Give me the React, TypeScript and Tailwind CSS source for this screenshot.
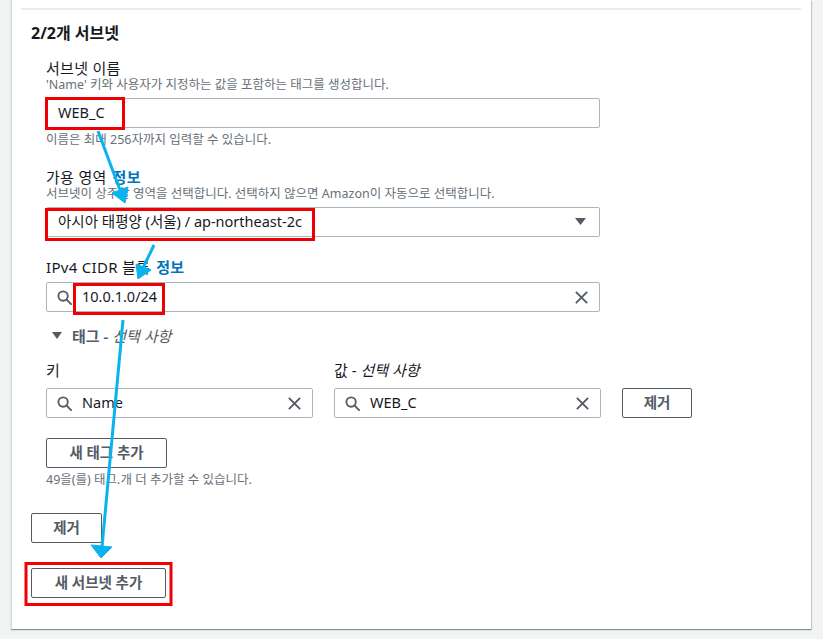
import React from 'react';

const SearchIcon = () => (
  <svg width="15" height="15" viewBox="0 0 16 16" fill="none" stroke="#545b64" strokeWidth="2">
    <circle cx="6.5" cy="6.5" r="5" />
    <path d="M10.3 10.3 15 15" strokeLinecap="round" />
  </svg>
);

const XIcon = () => (
  <svg width="15" height="15" viewBox="0 0 16 16" fill="none" stroke="#545b64" strokeWidth="2">
    <path d="M2 2l12 12M14 2 2 14" />
  </svg>
);

const SearchInput = ({ value, className }: { value: string; className: string }) => (
  <div className={`flex h-[30px] items-center rounded-[2px] border border-[#aab7b8] bg-white pl-[10px] pr-[10px] ${className}`}>
    <SearchIcon />
    <span className="ml-[10px] flex-1 text-[14.5px] text-[#16191f]">{value}</span>
    <XIcon />
  </div>
);

const Button = ({ label, className }: { label: string; className: string }) => (
  <button className={`flex h-[30px] items-center justify-center rounded-[2px] border border-[#545b64] bg-white text-[14.5px] font-semibold text-[#545b64] ${className}`}>
    {label}
  </button>
);

const Info = () => <span className="ml-[6px] font-semibold text-[#0073bb]">정보</span>;

export default function App() {
  return (
    <div className="relative h-[639px] w-[823px] overflow-hidden bg-[#f2f3f3] font-['Noto_Sans','Noto_Sans_CJK_KR',sans-serif]">
      {/* card */}
      <div className="ml-[11px] h-[629px] w-[800px] border-l border-[#d5dbdb] bg-white shadow-[0_1px_1px_0_rgba(0,28,36,0.35),1px_1px_1px_0_rgba(0,28,36,0.15)]">
        <div className="pt-[8px]">
          <div className="ml-[9px] mr-[10px] border-t-2 border-[#eaeded]" />
        </div>
        <div className="pl-[19px]">
          <h2 className="mt-[13px] text-[16px] font-bold leading-[20px] text-[#16191f]">2/2개 서브넷</h2>

          <div className="pl-[15px]">
            {/* subnet name */}
            <div className="mt-[16px] text-[15px] leading-[18px] tracking-[0.3px] text-[#16191f]">서브넷 이름</div>
            <div className="text-[12.5px] leading-[16px] text-[#687078]">'Name' 키와 사용자가 지정하는 값을 포함하는 태그를 생성합니다.</div>
            <div className="mt-[5px] flex h-[30px] w-[554px] items-center rounded-[2px] border border-[#aab7b8] pl-[11px] text-[14.5px] text-[#16191f]">
              WEB_C
            </div>
            <div className="mt-[4px] text-[12.5px] leading-[16px] text-[#687078]">이름은 최대 256자까지 입력할 수 있습니다.</div>

            {/* availability zone */}
            <div className="mt-[20px] text-[15px] leading-[18px] tracking-[0.3px] text-[#16191f]">
              가용 영역<Info />
            </div>
            <div className="text-[12.5px] leading-[16px] text-[#687078]">서브넷이 상주할 영역을 선택합니다. 선택하지 않으면 Amazon이 자동으로 선택합니다.</div>
            <div className="mt-[5px] flex h-[30px] w-[554px] items-center justify-between rounded-[2px] border border-[#aab7b8] pl-[11px] pr-[13px] text-[14.5px] text-[#16191f]">
              <span>아시아 태평양 (서울) / ap-northeast-2c</span>
              <svg width="11" height="8" viewBox="0 0 11 8">
                <path d="M0 0h11L5.5 7z" fill="#545b64" />
              </svg>
            </div>

            {/* cidr */}
            <div className="mt-[21px] text-[15px] leading-[18px] tracking-[0.3px] text-[#16191f]">
              IPv4 CIDR 블록<Info />
            </div>
            <SearchInput value="10.0.1.0/24" className="mt-[6px] w-[554px]" />

            {/* tags */}
            <div className="mt-[15px] flex items-center text-[15px] leading-[18px] text-[#545b64]">
              <svg width="10" height="8" viewBox="0 0 10 8" className="ml-[6px]">
                <path d="M0 0h10L5 7z" fill="#545b64" />
              </svg>
              <span className="ml-[10px] font-semibold">
                태그 - <i className="font-normal">선택 사항</i>
              </span>
            </div>

            <div className="mt-[16px] flex gap-[21px]">
              <div className="w-[267px]">
                <div className="text-[15px] leading-[18px] text-[#16191f]">키</div>
                <SearchInput value="Name" className="mt-[9px] w-[267px]" />
              </div>
              <div className="w-[267px]">
                <div className="text-[15px] leading-[18px] text-[#16191f]">
                  값 - <i>선택 사항</i>
                </div>
                <SearchInput value="WEB_C" className="mt-[9px] w-[267px]" />
              </div>
              <div className="flex items-end">
                <Button label="제거" className="w-[70px]" />
              </div>
            </div>

            <Button label="새 태그 추가" className="mt-[20px] w-[121px]" />
            <div className="mt-[4px] text-[12.5px] leading-[16px] text-[#687078]">49을(를) 태그.개 더 추가할 수 있습니다.</div>
          </div>

          <Button label="제거" className="mt-[25px] w-[71px]" />
          <Button label="새 서브넷 추가" className="mt-[25px] w-[135px]" />
        </div>
      </div>

      {/* annotations */}
      <svg className="pointer-events-none absolute left-0 top-0" width="823" height="639">
        <g fill="none" stroke="#f00000" strokeWidth="3">
          <rect x="46.5" y="98.5" width="77" height="30" />
          <rect x="46.5" y="209.5" width="267" height="30" />
          <rect x="74.5" y="284.5" width="89" height="29" />
          <rect x="26" y="563.5" width="145" height="41" />
        </g>
        <g stroke="#0ab2ee" strokeWidth="3" fill="#0ab2ee">
          <line x1="98" y1="131" x2="120" y2="190" />
          <polygon points="125,203 128,187 112,193" strokeWidth="1" />
          <line x1="154" y1="245" x2="143" y2="268" />
          <polygon points="138,279 151,270 136,264" strokeWidth="1" />
          <line x1="123" y1="320" x2="102" y2="547" />
          <polygon points="101,558 112,547 91,545" strokeWidth="1" />
        </g>
      </svg>
    </div>
  );
}
